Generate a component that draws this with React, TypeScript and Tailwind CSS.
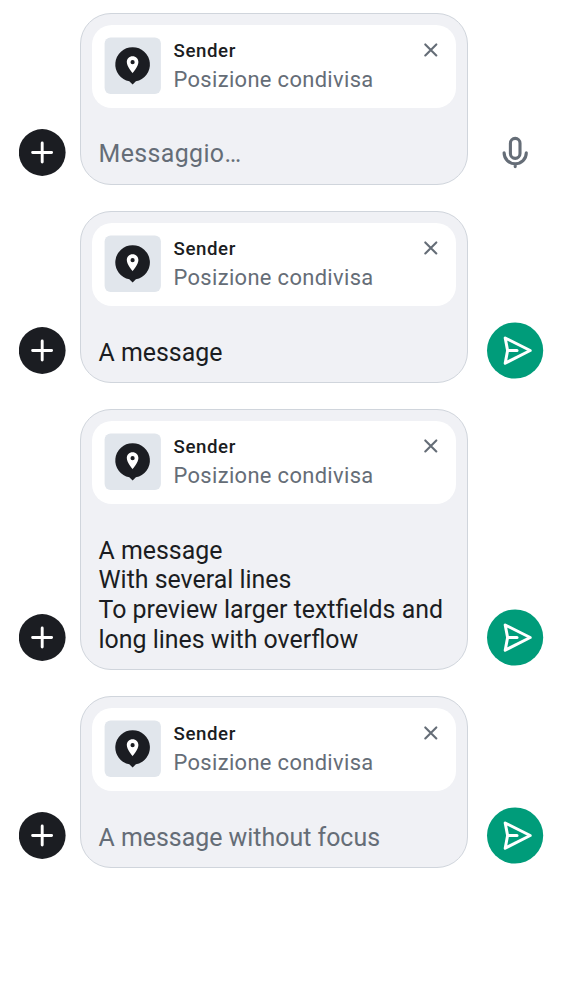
import React from "react";

function PlusButton() {
  return (
    <div className="mb-[9px] h-[47px] w-[47px] shrink-0">
      <svg width="47" height="47" viewBox="0 0 47 47" fill="none">
        <circle cx="23.2" cy="23.5" r="23.4" fill="#1b1d22" />
        <path d="M23.2 14V33M13.6 23.5H32.6" stroke="#fff" strokeWidth="2.9" strokeLinecap="round" />
      </svg>
    </div>
  );
}

function SendButton() {
  return (
    <svg className="h-14 w-14 overflow-visible" viewBox="0 0 56 56" fill="none" stroke="#fff" strokeWidth="3" strokeLinejoin="round">
      <circle cx="28.1" cy="27.5" r="28.1" fill="#009c7a" stroke="none" />
      <path d="M18.2 15L43.2 27.5L18.2 40.2L20.6 27.5Z" />
      <path d="M21 27.5H30" strokeLinecap="round" />
    </svg>
  );
}

function MicIcon() {
  return (
    <svg className="h-14 w-14" viewBox="0 0 56 56" fill="none" stroke="#656d77" strokeWidth="3.1" strokeLinecap="round">
      <rect x="23.4" y="13.4" width="9.6" height="20" rx="4.8" />
      <path d="M17.1 27.8C17.1 34 22 38.7 28.2 38.7S39.3 34 39.3 27.8M28.2 38.7V41.6" />
    </svg>
  );
}

function LocationThumb() {
  return (
    <svg className="h-[57px] w-[57px] shrink-0 overflow-visible" viewBox="0 0 57 57">
      <rect x="-0.4" y="-0.4" width="56.3" height="56.3" rx="6" fill="#e1e6ec" />
      <path d="M27.6 9.2A17.2 17.2 0 0 0 24.3 43.3L27.6 46.5L30.9 43.3A17.2 17.2 0 0 0 27.6 9.2Z" fill="#1b1d22" />
      <path
        fillRule="evenodd"
        d="M27.6 18.2C24.2 18.2 21.8 20.8 21.8 24.1C21.8 28.6 27.6 35.2 27.6 35.2S33.4 28.6 33.4 24.1C33.4 20.8 31 18.2 27.6 18.2ZM27.6 22.1A2.1 2.1 0 1 1 27.6 26.3A2.1 2.1 0 1 1 27.6 22.1Z"
        fill="#fff"
      />
    </svg>
  );
}

function ReplyCard() {
  return (
    <div className="flex h-[83px] w-[364px] rounded-[20px] bg-white pt-[13px] pl-[13px]">
      <LocationThumb />
      <div className="ml-[11.5px] flex-1 pt-px">
        <div className="h-[25px] text-[18.7px] leading-[25px] font-medium tracking-[0.58px] text-[#1b1d22]">Sender</div>
        <div className="h-[31px] text-[21.9px] leading-[31px] tracking-[0.35px] whitespace-nowrap text-[#656d77]">Posizione condivisa</div>
      </div>
      <svg className="mr-[18px] h-[25px] w-[14px] shrink-0" viewBox="0 0 14 25" fill="none" stroke="#656d77" strokeWidth="2.1" strokeLinecap="round">
        <path d="M1.3 6.4L12.3 17.4M12.3 6.4L1.3 17.4" />
      </svg>
    </div>
  );
}

type ComposerProps = {
  lines: string[];
  muted?: boolean;
  placeholder?: boolean;
  tall?: boolean;
};

function Composer({ lines, muted, placeholder, tall }: ComposerProps) {
  return (
    <div className={`flex items-end ${tall ? "h-[261px]" : "h-[172px]"}`}>
      <PlusButton />
      <div className="ml-[14px] flex h-full w-[388px] flex-col rounded-[31px] border border-[#d0d5dc] bg-[#f0f1f5] px-[11px] pt-[11px]">
        <ReplyCard />
        <div
          className={`pl-[6.5px] text-[24.92px] leading-[29.7px] whitespace-nowrap ${
            muted ? "text-[#656d77]" : "text-[#1b1d22]"
          } ${placeholder ? "mt-[31px] tracking-[0.39px]" : tall ? "mt-[31.6px]" : "mt-[32px]"}`}
        >
          {lines.map((line) => (
            <div key={line}>{line}</div>
          ))}
        </div>
      </div>
      <div className="mb-1 ml-[19px] h-14 w-14">{placeholder ? <MicIcon /> : <SendButton />}</div>
    </div>
  );
}

export default function App() {
  return (
    <main className="flex h-[1000px] w-[562px] flex-col gap-[26px] bg-white pt-[13px] pl-[19px] font-['Roboto',sans-serif]">
      <Composer lines={["Messaggio…"]} muted placeholder />
      <Composer lines={["A message"]} />
      <Composer
        lines={["A message", "With several lines", "To preview larger textfields and", "long lines with overflow"]}
        tall
      />
      <Composer lines={["A message without focus"]} muted />
    </main>
  );
}
